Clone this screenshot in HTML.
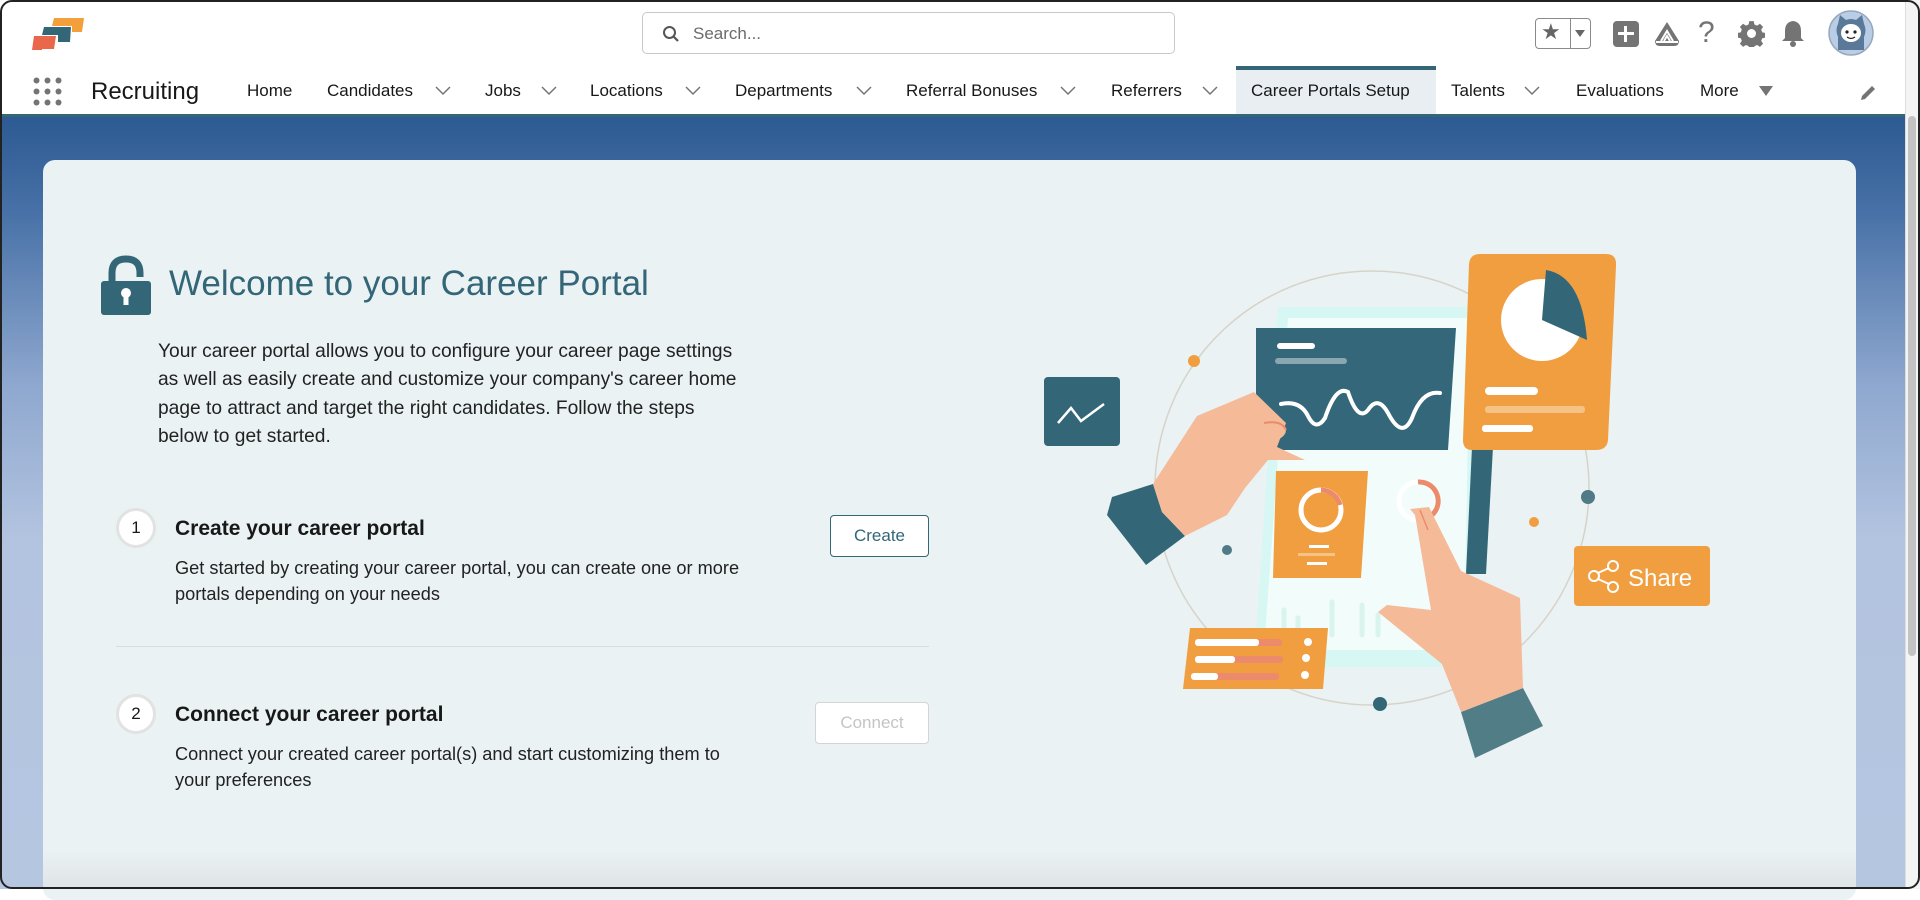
<!DOCTYPE html>
<html><head><meta charset="utf-8"><style>
*{box-sizing:border-box;margin:0;padding:0}
body{width:1920px;height:889px;overflow:hidden;font-family:"Liberation Sans",Arial,sans-serif;background:#fff;position:relative;color:#181818}
.a{position:absolute}
.nav{font-size:17px;color:#181818;top:81px;white-space:nowrap}
.chev{position:absolute;top:86px;width:16px;height:10px}
</style></head><body>
<div class="a" style="left:0;top:0;width:1920px;height:116px;background:#fff"></div>
<svg class="a" style="left:30px;top:16px" width="58" height="36" viewBox="0 0 58 36">
<polygon points="24,2 54,2 52,16 42,16 42,10 22,10" fill="#f3a03c"/>
<polygon points="14,11 41,11 40,26 28,26 28,19 12,19" fill="#336677"/>
<polygon points="4,20 26,20 24,33 12,33 12,34 2,34" fill="#e9674b"/>
</svg>
<div class="a" style="left:642px;top:12px;width:533px;height:42px;border:1px solid #c9c9c9;border-radius:5px;background:#fff"></div>
<svg class="a" style="left:662px;top:25px" width="18" height="18" viewBox="0 0 18 18"><circle cx="7.5" cy="7.5" r="5.5" fill="none" stroke="#555" stroke-width="2"/><line x1="11.5" y1="11.5" x2="16" y2="16" stroke="#555" stroke-width="2.2"/></svg>
<div class="a" style="left:693px;top:24px;font-size:17px;color:#6b6b6b">Search...</div>
<div class="a" style="left:1535px;top:18px;width:56px;height:31px;border:1px solid #8a8a8a;border-radius:4px;background:#fff"></div>
<div class="a" style="left:1570px;top:18px;width:1px;height:31px;background:#8a8a8a"></div>
<div class="a" style="left:1541px;top:19px;font-size:22px;color:#666">★</div>
<div class="a" style="left:1575px;top:30px;width:0;height:0;border-left:5px solid transparent;border-right:5px solid transparent;border-top:7px solid #666"></div>
<div class="a" style="left:1613px;top:21px;width:26px;height:26px;background:#747474;border-radius:4px"></div>
<div class="a" style="left:1618px;top:32px;width:16px;height:3px;background:#fff"></div>
<div class="a" style="left:1624px;top:26px;width:3px;height:16px;background:#fff"></div>
<svg class="a" style="left:1652px;top:19px" width="30" height="30" viewBox="0 0 30 30"><path d="M15 3 L27 22 Q27 27 22 27 L8 27 Q3 27 3 22 Z" fill="#747474"/><path d="M9 22 L15 12 L21 22 M12 22 L15 17 L18 22" stroke="#fff" stroke-width="2" fill="none"/><rect x="4" y="22" width="22" height="2" fill="#fff"/></svg>
<div class="a" style="left:1698px;top:16px;font-size:30px;color:#747474">?</div>
<svg class="a" style="left:1738px;top:20px" width="27" height="27" viewBox="0 0 24 24"><path fill="#747474" d="M10 1h4l.6 3 2.4 1 2.5-1.7 2.8 2.8-1.7 2.5 1 2.4 3 .6v4l-3 .6-1 2.4 1.7 2.5-2.8 2.8-2.5-1.7-2.4 1-.6 3h-4l-.6-3-2.4-1-2.5 1.7-2.8-2.8 1.7-2.5-1-2.4-3-.6v-4l3-.6 1-2.4-1.7-2.5 2.8-2.8 2.5 1.7 2.4-1z"/><circle cx="12" cy="12" r="4" fill="#fff"/></svg>
<svg class="a" style="left:1780px;top:19px" width="26" height="28" viewBox="0 0 26 28"><path d="M13 2 Q5 3 5 12 L5 19 L2 22 L24 22 L21 19 L21 12 Q21 3 13 2Z" fill="#747474"/><circle cx="13" cy="25" r="3" fill="#747474"/></svg>
<svg class="a" style="left:1828px;top:10px" width="46" height="46" viewBox="0 0 46 46"><circle cx="23" cy="23" r="22" fill="#b9cde6" stroke="#98a8bd" stroke-width="1.5"/><path d="M10 14 L12 5 L18 10 Q23 8 28 10 L34 5 L36 14 Q39 20 36 27 L36 40 L10 40 L10 27 Q7 20 10 14Z" fill="#5a7898"/><ellipse cx="23" cy="23" rx="10" ry="9" fill="#fff"/><circle cx="19" cy="22" r="1.6" fill="#222"/><circle cx="27" cy="22" r="1.6" fill="#222"/><path d="M19 27 Q23 30 27 27" stroke="#222" stroke-width="1.2" fill="none"/></svg>
<svg class="a" style="left:33px;top:77px" width="29" height="29" viewBox="0 0 29 29"><g fill="#747474"><circle cx="3.5" cy="3.5" r="3"/><circle cx="14.5" cy="3.5" r="3"/><circle cx="25.5" cy="3.5" r="3"/><circle cx="3.5" cy="14.5" r="3"/><circle cx="14.5" cy="14.5" r="3"/><circle cx="25.5" cy="14.5" r="3"/><circle cx="3.5" cy="25.5" r="3"/><circle cx="14.5" cy="25.5" r="3"/><circle cx="25.5" cy="25.5" r="3"/></g></svg>
<div class="a" style="left:91px;top:78px;font-size:24px;color:#181818">Recruiting</div>
<div class="a" style="left:1236px;top:66px;width:200px;height:50px;background:#e9eef2"></div>
<div class="a" style="left:1236px;top:66px;width:200px;height:4px;background:#336677"></div>
<div class="a nav" style="left:247px">Home</div>
<div class="a nav" style="left:327px">Candidates</div>
<div class="a nav" style="left:485px">Jobs</div>
<div class="a nav" style="left:590px">Locations</div>
<div class="a nav" style="left:735px">Departments</div>
<div class="a nav" style="left:906px">Referral Bonuses</div>
<div class="a nav" style="left:1111px">Referrers</div>
<div class="a nav" style="left:1251px">Career Portals Setup</div>
<div class="a nav" style="left:1451px">Talents</div>
<div class="a nav" style="left:1576px">Evaluations</div>
<div class="a nav" style="left:1700px">More</div>
<svg class="chev" style="left:435px"><path d="M1 1 L8 8 L15 1" stroke="#747474" stroke-width="1.5" fill="none"/></svg>
<svg class="chev" style="left:541px"><path d="M1 1 L8 8 L15 1" stroke="#747474" stroke-width="1.5" fill="none"/></svg>
<svg class="chev" style="left:685px"><path d="M1 1 L8 8 L15 1" stroke="#747474" stroke-width="1.5" fill="none"/></svg>
<svg class="chev" style="left:856px"><path d="M1 1 L8 8 L15 1" stroke="#747474" stroke-width="1.5" fill="none"/></svg>
<svg class="chev" style="left:1060px"><path d="M1 1 L8 8 L15 1" stroke="#747474" stroke-width="1.5" fill="none"/></svg>
<svg class="chev" style="left:1202px"><path d="M1 1 L8 8 L15 1" stroke="#747474" stroke-width="1.5" fill="none"/></svg>
<svg class="chev" style="left:1524px"><path d="M1 1 L8 8 L15 1" stroke="#747474" stroke-width="1.5" fill="none"/></svg>
<div class="a" style="left:1759px;top:86px;width:0;height:0;border-left:7px solid transparent;border-right:7px solid transparent;border-top:10px solid #747474"></div>
<svg class="a" style="left:1859px;top:84px" width="18" height="18" viewBox="0 0 18 18"><path d="M2 16 L3 12 L13 2 L16 5 L6 15 Z" fill="#747474"/></svg>
<div class="a" style="left:0;top:116px;width:1905px;height:773px;background:linear-gradient(180deg,#2d5a92 0%,#4670a6 12%,#8fa8cf 35%,#b3c4e0 55%,#b5c6e1 100%)"></div>
<div class="a" style="left:0;top:114px;width:1905px;height:3px;background:#336677"></div>
<div class="a" style="left:1905px;top:0;width:15px;height:889px;background:#f4f4f4;border-left:1px solid #ddd"></div>
<div class="a" style="left:1908px;top:116px;width:8px;height:540px;background:#c3c3c3;border-radius:4px"></div>
<div class="a" style="left:43px;top:160px;width:1813px;height:740px;background:#eaf2f4;border-radius:12px"></div>
<div class="a" style="left:43px;top:850px;width:1813px;height:39px;background:linear-gradient(180deg,rgba(234,242,244,0),#dfe4e6)"></div>
<svg class="a" style="left:100px;top:255px" width="52" height="61" viewBox="0 0 52 61"><path d="M12 27 L12 18 Q12 4 26 4 Q40 4 40 18 L40 22" stroke="#336677" stroke-width="7" fill="none"/><rect x="1" y="26" width="50" height="34" rx="3" fill="#336677"/><circle cx="26" cy="38" r="5" fill="#fff"/><rect x="23.5" y="40" width="5" height="10" fill="#fff"/></svg>
<div class="a" style="left:169px;top:264px;font-size:35px;color:#336677;white-space:nowrap">Welcome to your Career Portal</div>
<div class="a" style="left:158px;top:338px;width:590px;font-size:19.2px;line-height:28.3px;color:#222">Your career portal allows you to configure your career page settings as well as easily create and customize your company's career home page to attract and target the right candidates. Follow the steps below to get started.</div>
<div class="a" style="left:116px;top:508px;width:40px;height:40px;border-radius:50%;background:#fff;border:3px solid #e2e2e2;font-size:17px;text-align:center;line-height:34px">1</div>
<div class="a" style="left:175px;top:517px;font-size:21px;font-weight:bold;white-space:nowrap">Create your career portal</div>
<div class="a" style="left:175px;top:555px;width:580px;font-size:18.2px;line-height:26px;color:#222">Get started by creating your career portal, you can create one or more portals depending on your needs</div>
<div class="a" style="left:830px;top:515px;width:99px;height:42px;border:1px solid #336677;border-radius:4px;background:#fff;color:#336677;font-size:17px;text-align:center;line-height:40px">Create</div>
<div class="a" style="left:116px;top:646px;width:813px;height:1px;background:#dcdcdc"></div>
<div class="a" style="left:116px;top:694px;width:40px;height:40px;border-radius:50%;background:#fff;border:3px solid #e2e2e2;font-size:17px;text-align:center;line-height:34px">2</div>
<div class="a" style="left:175px;top:703px;font-size:21px;font-weight:bold;white-space:nowrap">Connect your career portal</div>
<div class="a" style="left:175px;top:741px;width:575px;font-size:18.2px;line-height:26px;color:#222">Connect your created career portal(s) and start customizing them to your preferences</div>
<div class="a" style="left:815px;top:702px;width:114px;height:42px;border:1px solid #d4d4d4;border-radius:4px;background:#fff;color:#c4c4c4;font-size:17px;text-align:center;line-height:40px">Connect</div>
<svg class="a" style="left:1020px;top:240px" width="720" height="540" viewBox="0 0 720 540">
<circle cx="352" cy="248" r="217" fill="none" stroke="#d7d3c8" stroke-width="1.5"/>
<polygon points="258,67 459,67 452,427 234,427" fill="#d6f7f3"/>
<polygon points="268,78 450,78 444,410 244,410" fill="#f2fdfb"/>
<polygon points="452,207 473,207 466,334 446,334" fill="#336677"/>
<g stroke="#d9f3ef" stroke-width="5" stroke-linecap="round"><line x1="264" y1="370" x2="264" y2="395"/><line x1="278" y1="378" x2="278" y2="395"/><line x1="312" y1="362" x2="312" y2="395"/><line x1="342" y1="365" x2="342" y2="395"/><line x1="358" y1="375" x2="358" y2="395"/></g>
<polygon points="236,88 436,88 428,210 236,210" fill="#34677a"/>
<rect x="257" y="103" width="38" height="6" rx="3" fill="#fff"/>
<rect x="255" y="118" width="72" height="6" rx="3" fill="#8aa6b0"/>
<path d="M261 164 Q280 160 288 176 Q296 192 305 178 Q316 145 328 152 Q338 182 348 170 Q358 155 368 173 Q382 200 392 178 Q402 150 420 153" stroke="#fff" stroke-width="4" fill="none" stroke-linecap="round"/>
<path d="M460 14 L586 14 Q597 14 596 26 L588 200 Q587 210 576 210 L452 210 Q443 210 443 200 L449 24 Q450 14 460 14Z" fill="#f09e3f"/>
<ellipse cx="522" cy="80" rx="41" ry="41" fill="#fff"/>
<path d="M526 30 Q562 36 567 100 L522 80Z" fill="#336677"/>
<rect x="465" y="147" width="53" height="8" rx="4" fill="#fff"/>
<rect x="465" y="166" width="100" height="7" rx="3" fill="#f6c387"/>
<rect x="462" y="185" width="51" height="7" rx="3" fill="#fff"/>
<rect x="24" y="137" width="76" height="69" rx="4" fill="#336677"/>
<path d="M38 183 L51 168 L61 181 L84 164" stroke="#fff" stroke-width="2.5" fill="none"/>
<polygon points="256,231 348,231 341,338 253,338" fill="#f09e3f"/>
<circle cx="301" cy="270" r="20" fill="none" stroke="#fff" stroke-width="5"/>
<path d="M301 250 A20 20 0 0 1 320 265" stroke="#eb8b6c" stroke-width="5" fill="none"/>
<rect x="289" y="305" width="20" height="3" fill="#fff"/><rect x="278" y="313" width="37" height="3" fill="#f6c387"/><rect x="287" y="322" width="20" height="3" fill="#fff"/>
<circle cx="398" cy="261" r="19" fill="none" stroke="#fff" stroke-width="5"/>
<path d="M398 242 A19 19 0 0 1 412 275" stroke="#eb8b6c" stroke-width="5" fill="none"/>
<polygon points="92,257 133,244 142,272 165,296 126,325 87,275" fill="#336677"/>
<polygon points="133,244 177,176 234,152 266,183 257,207 285,220 248,220 225,248 207,275 165,296 142,272" fill="#f5ba98"/>
<ellipse cx="246" cy="190" rx="20" ry="12" fill="#f5ba98"/>
<path d="M244 183 Q262 180 266 190" stroke="#eb8b6c" stroke-width="2" fill="none"/>
<polygon points="441,472 503,448 523,486 455,518" fill="#517d87"/>
<polygon points="390,269 409,267 441,331 500,358 503,448 441,472 422,424 358,372 367,365 411,370 395,275" fill="#f5ba98"/>
<path d="M400 270 L408 290" stroke="#eb8b6c" stroke-width="1.5"/>
<polygon points="170,388 308,388 303,449 163,449" fill="#f09e3f"/>
<rect x="175" y="399" width="87" height="7" rx="3" fill="#eb8b6c"/><rect x="175" y="399" width="64" height="7" rx="3" fill="#fff"/>
<rect x="175" y="416" width="88" height="7" rx="3" fill="#eb8b6c"/><rect x="175" y="416" width="40" height="7" rx="3" fill="#fff"/>
<rect x="171" y="433" width="88" height="7" rx="3" fill="#eb8b6c"/><rect x="171" y="433" width="27" height="7" rx="3" fill="#fff"/>
<circle cx="288" cy="402" r="4" fill="#fff"/><circle cx="286" cy="418" r="4" fill="#fff"/><circle cx="285" cy="435" r="4" fill="#fff"/>
<rect x="554" y="306" width="136" height="60" rx="4" fill="#f09e3f"/>
<g stroke="#fff" stroke-width="2" fill="none"><circle cx="574" cy="336" r="5"/><circle cx="593" cy="326" r="5"/><circle cx="593" cy="347" r="5"/><line x1="578" y1="333" x2="589" y2="328"/><line x1="578" y1="339" x2="589" y2="344"/></g>
<text x="608" y="346" font-family="Liberation Sans,sans-serif" font-size="24" fill="#fff">Share</text>
<circle cx="174" cy="121" r="6" fill="#f09e3f"/>
<circle cx="207" cy="310" r="5" fill="#4f7a86"/>
<circle cx="568" cy="257" r="7" fill="#4f7a86"/>
<circle cx="514" cy="282" r="5" fill="#f09e3f"/>
<circle cx="360" cy="464" r="7" fill="#336677"/>
</svg>
<div class="a" style="left:0;top:0;width:1920px;height:889px;border:2px solid #222;border-radius:12px;pointer-events:none"></div>
</body></html>
